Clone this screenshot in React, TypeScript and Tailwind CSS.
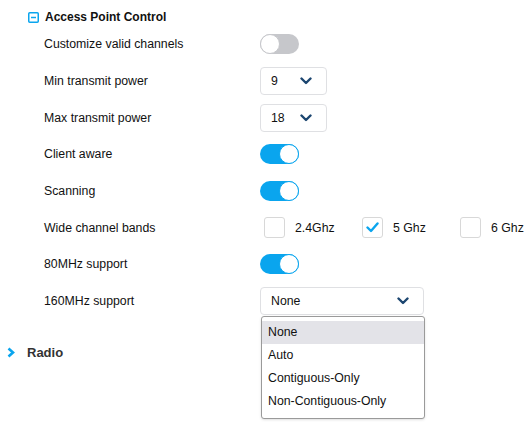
import type { ReactNode } from 'react'

const FONT = { fontFamily: '"Liberation Sans", Arial, sans-serif' }

function Toggle({ on }: { on?: boolean }) {
  return (
    <div
      className={`relative h-[20px] w-[39px] rounded-full ${on ? 'bg-[#0aa5ee]' : 'bg-[#c6c7cb]'}`}
    >
      <span
        className={`absolute top-0 h-[20px] w-[20px] rounded-full bg-white border ${
          on ? 'right-0 border-[#0aa5ee]' : 'left-0 border-[#c6c7cb]'
        }`}
      />
    </div>
  )
}

function Chevron() {
  return (
    <svg width="12" height="8" viewBox="0 0 12 8" fill="none">
      <path d="M1.5 1.5 L6 6 L10.5 1.5" stroke="#1c4670" strokeWidth="2.4" strokeLinecap="round" strokeLinejoin="round" />
    </svg>
  )
}

function Select({ value, width }: { value: string; width: string }) {
  return (
    <div
      className={`flex h-[28px] ${width} items-center justify-between rounded-[4px] border border-[#dfe0e3] bg-white pl-[10px] pr-[14px] text-[12.3px] text-[#111]`}
    >
      <span>{value}</span>
      <Chevron />
    </div>
  )
}

function Checkbox({ checked, label }: { checked?: boolean; label: string }) {
  return (
    <div className="flex items-center gap-[10px]">
      <div className="flex h-[21px] w-[21px] items-center justify-center rounded-[3px] border border-[#d8d8d8] bg-white">
        {checked && (
          <svg width="13" height="11" viewBox="0 0 13 11" fill="none">
            <path d="M1.5 5.5 L5 9 L11.5 1.5" stroke="#0aa5ee" strokeWidth="2.4" strokeLinecap="round" strokeLinejoin="round" />
          </svg>
        )}
      </div>
      <span className="text-[12.3px] text-[#111]">{label}</span>
    </div>
  )
}

function Row({ label, children }: { label: string; children: ReactNode }) {
  return (
    <div className="flex h-[36.7px] items-center">
      <div className="w-[216px] text-[12.3px] text-[#111]">{label}</div>
      <div className="flex items-center">{children}</div>
    </div>
  )
}

const options = ['None', 'Auto', 'Contiguous-Only', 'Non-Contiguous-Only']

export default function App() {
  return (
    <div className="h-[422px] w-[532px] overflow-hidden bg-white" style={FONT}>
      {/* Access Point Control section */}
      <div className="flex items-center gap-[6px] pl-[28px] pt-[8px] h-[26px]">
        <svg width="11" height="11" viewBox="0 0 11 11" fill="none">
          <rect x="0.75" y="0.75" width="9.5" height="9.5" rx="1" stroke="#0aa5ee" strokeWidth="1.5" />
          <path d="M3 5.5 H8" stroke="#0aa5ee" strokeWidth="1.5" />
        </svg>
        <span className="text-[12px] font-bold text-[#111]">Access Point Control</span>
      </div>

      <div className="pl-[44px]">
        <Row label="Customize valid channels">
          <Toggle />
        </Row>
        <Row label="Min transmit power">
          <Select value="9" width="w-[67px]" />
        </Row>
        <Row label="Max transmit power">
          <Select value="18" width="w-[67px]" />
        </Row>
        <Row label="Client aware">
          <Toggle on />
        </Row>
        <Row label="Scanning">
          <Toggle on />
        </Row>
        <Row label="Wide channel bands">
          <div className="flex items-center pl-[4px]">
            <div className="w-[98px]">
              <Checkbox label="2.4Ghz" />
            </div>
            <div className="w-[98px]">
              <Checkbox checked label="5 Ghz" />
            </div>
            <Checkbox label="6 Ghz" />
          </div>
        </Row>
        <Row label="80MHz support">
          <Toggle on />
        </Row>
        <Row label="160MHz support">
          <div className="relative">
            <Select value="None" width="w-[164px]" />
            <div className="absolute left-[1px] top-full z-10 mt-[1px] w-[164px] rounded-[3px] border border-[#9a9a9a] bg-white pb-[5px] pt-[4px] shadow-sm">
              {options.map((o, i) => (
                <div
                  key={o}
                  className={`flex h-[23px] items-center pl-[6px] text-[12.3px] text-[#111] ${i === 0 ? 'bg-[#e3e3e8]' : ''}`}
                >
                  {o}
                </div>
              ))}
            </div>
          </div>
        </Row>
      </div>

      {/* Radio section */}
      <div className="mt-[23px] flex h-[20px] items-center gap-[12px] pl-[7px]">
        <svg width="8" height="11" viewBox="0 0 8 11" fill="none">
          <path d="M1.5 1.5 L6 5.5 L1.5 9.5" stroke="#0aa5ee" strokeWidth="2.6" strokeLinejoin="miter" />
        </svg>
        <span className="text-[13px] font-bold text-[#333]">Radio</span>
      </div>
    </div>
  )
}
